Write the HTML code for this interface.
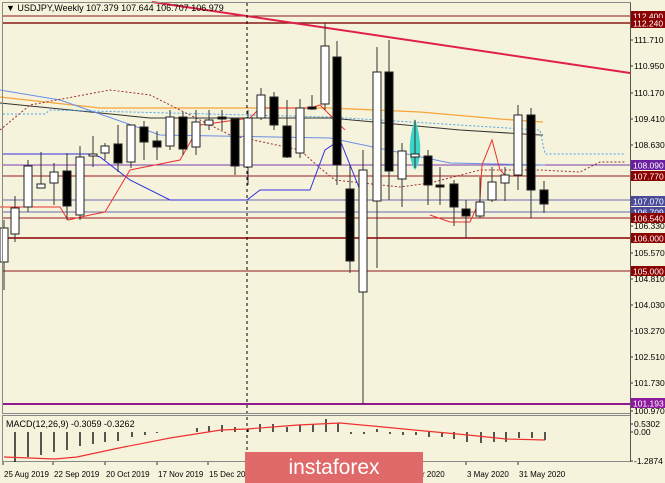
<!DOCTYPE html>
<html><head><meta charset="utf-8"><style>
html,body{margin:0;padding:0;background:#f5f3dc;}
svg{display:block;font-family:"Liberation Sans",sans-serif;}
</style></head><body>
<svg id="s" width="665" height="483" viewBox="0 0 665 483" xmlns="http://www.w3.org/2000/svg">
<rect width="665" height="483" fill="#f5f3dc"/>
<g id="g"></g>
</svg>
<script>
var g=document.getElementById('g'),h='';
function L(x1,y1,x2,y2,c,w,d){h+='<line x1="'+x1+'" y1="'+y1+'" x2="'+x2+'" y2="'+y2+'" stroke="'+c+'" stroke-width="'+(w||1)+'"'+(d?' stroke-dasharray="'+d+'"':'')+'/>';}
function P(pts,c,w,d){h+='<polyline fill="none" points="'+pts+'" stroke="'+c+'" stroke-width="'+(w||1)+'"'+(d?' stroke-dasharray="'+d+'"':'')+'/>';}
[[16,'#8b1a1a',1],[23,'#8b1a1a',1.5],[176,'#9b1b1b',1],[218,'#9b1b1b',1],[238,'#8b0000',1.5],[271,'#8b1a1a',1]].forEach(a=>L(3,a[0],630,a[0],a[1],a[2]));
[[165,'#7b3fb0',1],[200,'#6a6aa8',1],[212,'#6a6aa8',1]].forEach(a=>L(3,a[0],630,a[0],a[1],a[2]));
L(3,404,630,404,'#8e1a8e',2);
P('0,97 100,108 330,108 420,112 500,119 543,122','#f7a53c',1.3);
P('0,103 150,118 330,118 460,130 540,135 543,135','#333',1);
P('0,90 60,100 160,135 330,138 450,163 545,165','#6b8ee8',1);
P('3,114 45,114 50,110 330,117 540,130 545,154 625,154','#4da6f0',1,'2,2');
P('0,130 30,105 110,90 150,95 200,120 230,135 300,150 320,168 335,180 400,187 430,183 480,170 540,170 580,172 600,162 625,162','#9b3030',1,'2,2');
P('3,154 90,154 100,157 130,180 170,200 247,200 260,190 310,190 325,150 340,140 360,190','#3030e0',1);
P('0,207 60,207 68,220 90,215 105,212 130,170 180,160 200,125 250,118 260,108 310,108 320,105 345,130','#f03030',1);
P('430,215 450,222 470,222 480,200 482,165 492,140 500,170 505,175','#f03030',1);
L(152,2,630,73,'#e0204a',2);
L(247,3,247,462,'#000',1,'3,3');
h+='<path d="M415,119 C408,140 408,160 415,170 C422,160 422,140 415,119Z" fill="#3dd4c8"/>';
var C=[[4,228,262,220,290,1],[15,208,234,196,242,1],[28,166,207,160,212,1],[41,184,188,152,188,1],[54,172,183,163,205,1],[67,171,206,153,220,0],[80,157,215,146,220,1],[93,154,156,136,167,1],[105,146,153,143,160,1],[118,144,163,125,172,0],[131,125,162,125,168,1],[144,127,142,121,160,0],[157,141,147,131,160,0],[170,117,146,110,150,1],[183,117,149,112,155,0],[196,122,147,110,155,1],[209,120,125,110,130,1],[222,117,119,110,130,0],[235,119,166,118,175,0],[248,118,167,110,185,1],[261,95,118,88,120,1],[274,97,125,92,130,0],[287,126,157,100,158,0],[300,108,153,99,158,1],[312,107,109,95,110,0],[325,46,104,23,110,1],[337,57,165,41,185,0],[350,189,261,165,273,0],[363,170,292,150,404,1],[377,72,201,47,268,1],[389,72,171,40,200,0],[402,151,179,143,207,1],[415,154,157,120,168,1],[428,156,185,150,205,0],[440,185,187,167,205,0],[454,184,207,180,226,0],[466,209,216,200,238,0],[480,202,216,177,218,1],[492,182,200,167,202,1],[505,175,183,167,201,1],[518,115,175,105,190,1],[531,115,190,108,218,0],[544,190,204,181,213,0]];
C.forEach(c=>{L(c[0],c[3],c[0],c[4],'#333',1);var t=Math.min(c[1],c[2]),b=Math.max(c[1],c[2]);h+='<rect x="'+(c[0]-4)+'" y="'+t+'" width="8" height="'+Math.max(b-t,1.5)+'" fill="'+(c[5]?'#fff':'#000')+'" stroke="#222" stroke-width="1"/>';});
h+='<rect x="2.5" y="2.5" width="628" height="411" fill="none" stroke="#888" stroke-width="1"/>';
h+='<rect x="2.5" y="415.5" width="628" height="46" fill="none" stroke="#888" stroke-width="1"/>';
var Z=432,B=[[15,462],[28,457],[41,455],[54,452],[67,450],[80,446],[93,444],[105,442],[118,441],[132,437],[145,435],[157,433],[170,432],[183,432],[197,428],[209,426],[222,425],[235,427],[248,429],[260,424],[273,424],[287,427],[300,425],[313,424],[326,419],[338,423],[351,434],[364,434],[377,429],[390,434],[403,435],[416,435],[429,437],[442,437],[454,439],[467,442],[481,443],[494,442],[506,442],[519,438],[532,438],[545,440]];
B.forEach(b=>L(b[0],Z,b[0],b[1],'#000',1.3));
P('4,457 55,459 77,457 119,448 170,438 221,430 247,429 298,425 340,423 383,427 425,431 468,435 506,439 545,440','#f03030',1.2);
h+='<text x="6" y="11" font-size="9" fill="#000">▼ USDJPY,Weekly  107.379 107.644 106.707 106.979</text>';
h+='<text x="6" y="427" font-size="9" fill="#000">MACD(12,26,9) -0.3059 -0.3262</text>';
var T=[[40,'111.710'],[66,'110.950'],[93,'110.170'],[119,'109.410'],[145,'108.630'],[226,'106.330'],[253,'105.570'],[279,'104.810'],[305,'104.030'],[331,'103.270'],[357,'102.510'],[383,'101.730'],[411,'100.970'],[424,'0.5302'],[432,'0.00'],[461,'-1.2874']];
T.forEach(t=>{L(630,t[0],633,t[0],'#333');h+='<text x="634" y="'+(t[0]+3)+'" font-size="8.5" fill="#000">'+t[1]+'</text>';});
L(630.5,3,630.5,462,'#555',1);
var Lb=[[16,'112.400','#8b0000'],[23,'112.240','#8b0000'],[165,'108.090','#6a1fa0'],[176,'107.770','#8b0000'],[201,'107.070','#4a4a9a'],[212,'106.709','#4a4a9a'],[218,'106.540','#8b0000'],[238,'106.000','#8b0000'],[271,'105.000','#8b0000'],[403,'101.193','#8e1a9e']];
Lb.forEach(l=>{h+='<rect x="631" y="'+(l[0]-5)+'" width="34" height="10" fill="'+l[2]+'"/><text x="633" y="'+(l[0]+3.5)+'" font-size="8.5" fill="#fff">'+l[1]+'</text>';});
[[3,'25 Aug 2019'],[53,'22 Sep 2019'],[105,'20 Oct 2019'],[157,'17 Nov 2019'],[208,'15 Dec 2019'],[260,'12 Jan 2020'],[312,'9 Feb 2020'],[364,'8 Mar 2020'],[405,'5 Apr 2020'],[466,'3 May 2020'],[518,'31 May 2020']].forEach(d=>{L(d[0],462,d[0],465,'#333');h+='<text x="'+(d[0]+1)+'" y="477" font-size="8" fill="#000">'+d[1]+'</text>';});
h+='<rect x="245" y="452" width="178" height="31" fill="#e06a6a"/><text x="334" y="474" font-size="21" fill="#fff" text-anchor="middle">instaforex</text>';
g.innerHTML=h;
</script>
</body></html>
